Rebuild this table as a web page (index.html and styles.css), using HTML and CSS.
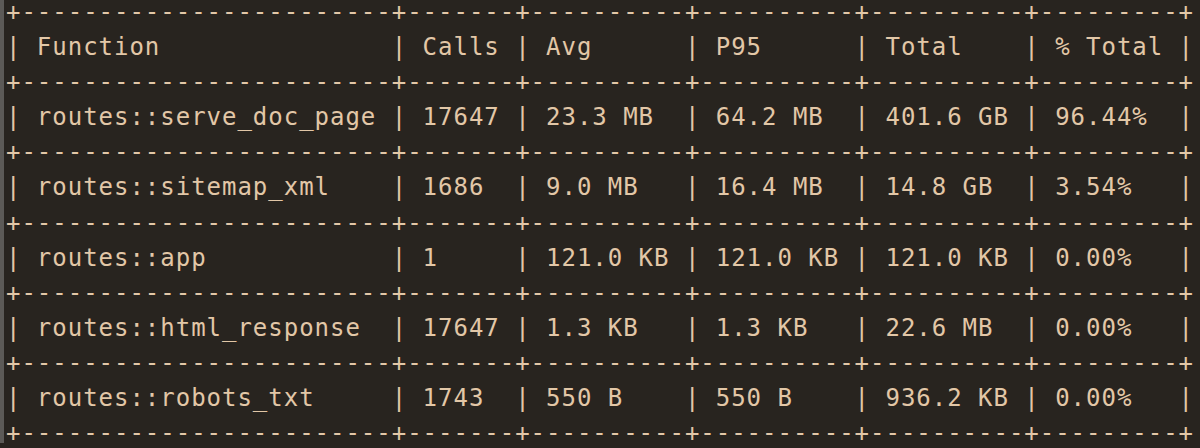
FILE: index.html
```html
<!DOCTYPE html>
<html lang="en">
<head>
    <meta charset="UTF-8">
    <meta name="viewport" content="width=device-width, initial-scale=1.0">
    <title>Memory by function</title>
    <link rel="stylesheet" href="styles.css">
</head>
<body>

<div class="terminal">
<pre class="tabla">+------------------------+-------+----------+----------+----------+---------+
| Function               | Calls | Avg      | P95      | Total    | % Total |
+------------------------+-------+----------+----------+----------+---------+
| routes::serve_doc_page | 17647 | 23.3 MB  | 64.2 MB  | 401.6 GB | 96.44%  |
+------------------------+-------+----------+----------+----------+---------+
| routes::sitemap_xml    | 1686  | 9.0 MB   | 16.4 MB  | 14.8 GB  | 3.54%   |
+------------------------+-------+----------+----------+----------+---------+
| routes::app            | 1     | 121.0 KB | 121.0 KB | 121.0 KB | 0.00%   |
+------------------------+-------+----------+----------+----------+---------+
| routes::html_response  | 17647 | 1.3 KB   | 1.3 KB   | 22.6 MB  | 0.00%   |
+------------------------+-------+----------+----------+----------+---------+
| routes::robots_txt     | 1743  | 550 B    | 550 B    | 936.2 KB | 0.00%   |
+------------------------+-------+----------+----------+----------+---------+</pre>
</div>

</body>
</html>
```

FILE: styles.css
```css
html, body {
    margin: 0;
    padding: 0;
    height: 100%;
    background-color: #28241f;
    overflow: hidden;
}
.terminal {
    height: 100%;
    border-left: 4px solid #5c5a57;
    padding-left: 2px;
    background-color: #28241f;
}
.tabla {
    margin: -5px 0 0 0;
    font-family: 'DejaVu Sans Mono', 'Liberation Mono', monospace;
    font-size: 24px;
    letter-spacing: 0.98px;
    line-height: 35.1px;
    color: #e2c7a7;
    white-space: pre;
}
```
